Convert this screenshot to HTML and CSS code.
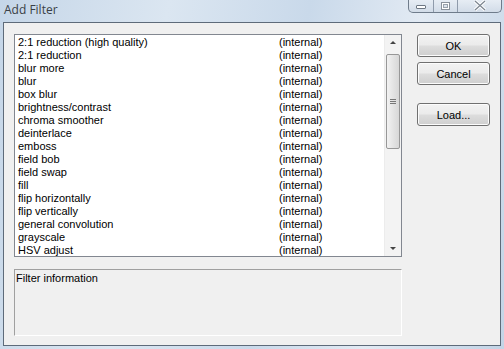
FILE: index.html
```html
<!DOCTYPE html>
<html lang="en">

<head>
    <meta charset="UTF-8">
    <title>Add Filter</title>
    <link rel="stylesheet" href="styles.css">
</head>

<body>

    <div class="frame">
        <div class="titlebar">
            <span class="title">Add Filter</span>
            <div class="caption-buttons">
                <div class="cap-btn cap-min"><span class="min-glyph"></span></div>
                <div class="cap-btn cap-max"><span class="max-glyph"></span></div>
                <div class="cap-btn cap-close">
                    <svg width="14" height="11" viewBox="0 0 14 11">
                        <path d="M2 1 L12 10 M12 1 L2 10" stroke="#fff" stroke-width="3.2" />
                        <path d="M2 1 L12 10 M12 1 L2 10" stroke="#7c8590" stroke-width="1.2" fill="none" />
                    </svg>
                </div>
            </div>
        </div>

        <div class="client">
            <div class="left">
                <div class="listbox">
                    <div class="items" id="filterList">
                        <!-- rows injected below -->
                    </div>
                    <div class="scrollbar">
                        <div class="arrow arrow-up"></div>
                        <div class="track">
                            <div class="thumb"><span class="grip"></span></div>
                        </div>
                        <div class="arrow arrow-down"></div>
                    </div>
                </div>
                <div class="info">Filter information</div>
            </div>

            <div class="buttons">
                <button>OK</button>
                <button>Cancel</button>
                <button class="load">Load...</button>
            </div>
        </div>
    </div>

    <script>
        var filters = [
            "2:1 reduction (high quality)",
            "2:1 reduction",
            "blur more",
            "blur",
            "box blur",
            "brightness/contrast",
            "chroma smoother",
            "deinterlace",
            "emboss",
            "field bob",
            "field swap",
            "fill",
            "flip horizontally",
            "flip vertically",
            "general convolution",
            "grayscale",
            "HSV adjust"
        ];

        var list = document.getElementById("filterList");
        filters.forEach(function (name) {
            list.innerHTML += '<div class="row"><span class="name">' + name +
                '</span><span class="src">(internal)</span></div>';
        });
    </script>

</body>

</html>
```

FILE: styles.css
```css
* {
    box-sizing: border-box;
    margin: 0;
    padding: 0;
}

body {
    width: 504px;
    height: 349px;
    overflow: hidden;
    font-family: "Liberation Sans", Arial, sans-serif;
    background: linear-gradient(100deg, #c5d6e8 0%, #dbe6f1 30%, #c9d9ea 55%, #e2eaf3 75%, #c3d4e6 100%);
}

.frame {
    height: 349px;
    padding: 0 3px 3px 3px;
    display: flex;
    flex-direction: column;
}

.titlebar {
    height: 22px;
    position: relative;
    flex-shrink: 0;
}

.title {
    position: absolute;
    left: 1px;
    top: 1px;
    font-family: "Open Sans", "Liberation Sans", sans-serif;
    font-size: 12px;
    color: #3a3f46;
}

.caption-buttons {
    position: absolute;
    right: -1px;
    top: -1px;
    display: flex;
    height: 14px;
    border: 1px solid #6f7c8b;
    border-top: none;
    border-radius: 0 0 5px 5px;
    overflow: hidden;
    background: linear-gradient(#e8eef5, #d2dce8);
}

.cap-btn {
    height: 13px;
    display: flex;
    align-items: center;
    justify-content: center;
    border-right: 1px solid #8f9bab;
}

.cap-min {
    width: 25px;
}

.cap-max {
    width: 24px;
}

.cap-close {
    width: 43px;
    border-right: none;
}

.min-glyph {
    width: 10px;
    height: 4px;
    border: 1px solid #6d7783;
    background: #fff;
    border-radius: 1px;
    margin-top: 2px;
}

.max-glyph {
    width: 9px;
    height: 8px;
    border: 1px solid #8a929c;
    box-shadow: inset 0 0 0 1px #fff, inset 0 0 0 2px #9aa2ab;
}

.client {
    flex: 1;
    background: #f0f0f0;
    border: 1px solid #5e6b7a;
    display: flex;
    padding: 11px 0 0 10px;
}

.left {
    width: 388px;
    display: flex;
    flex-direction: column;
}

.listbox {
    height: 223px;
    border: 1px solid #828790;
    background: #fff;
    display: flex;
}

.items {
    flex: 1;
    overflow: hidden;
    padding: 1px 0 0 3px;
}

.row {
    display: flex;
    height: 13px;
    font-size: 11px;
    line-height: 13px;
    color: #000;
    white-space: nowrap;
}

.name {
    width: 261px;
}

.scrollbar {
    width: 17px;
    background: #f3f3f3;
    border-left: 1px solid #ececec;
    display: flex;
    flex-direction: column;
}

.arrow {
    height: 17px;
    position: relative;
}

.arrow::after {
    content: "";
    position: absolute;
    left: 5px;
    border-left: 3px solid transparent;
    border-right: 3px solid transparent;
}

.arrow-up::after {
    top: 6px;
    border-bottom: 3px solid #444;
}

.arrow-down::after {
    top: 8px;
    border-top: 3px solid #444;
}

.track {
    flex: 1;
    padding: 2px 0 0 0;
}

.thumb {
    height: 95px;
    margin: 0 1px;
    border: 1px solid #979797;
    border-radius: 2px;
    background: linear-gradient(90deg, #f2f2f2, #e4e4e4 50%, #d7d7d7);
    display: flex;
    align-items: center;
    justify-content: center;
}

.grip {
    width: 6px;
    height: 5px;
    border-top: 1px solid #777;
    border-bottom: 1px solid #777;
    position: relative;
}

.grip::after {
    content: "";
    position: absolute;
    left: 0;
    right: 0;
    top: 1px;
    border-top: 1px solid #777;
}

.info {
    margin-top: 12px;
    height: 67px;
    border-top: 1px solid #a0a0a0;
    border-left: 1px solid #a0a0a0;
    border-right: 1px solid #fff;
    border-bottom: 1px solid #fff;
    font-size: 11px;
    padding: 2px 0 0 1px;
    color: #000;
}

.buttons {
    margin-left: 15px;
    display: flex;
    flex-direction: column;
    gap: 5px;
}

button {
    width: 73px;
    height: 23px;
    font-family: "Liberation Sans", Arial, sans-serif;
    font-size: 11px;
    color: #000;
    border: 1px solid #707070;
    border-radius: 3px;
    background: linear-gradient(#f2f2f2 0%, #ebebeb 48%, #dddddd 52%, #cfcfcf 100%);
    box-shadow: inset 0 0 0 1px #fcfcfc;
}

.load {
    margin-top: 13px;
}
```
